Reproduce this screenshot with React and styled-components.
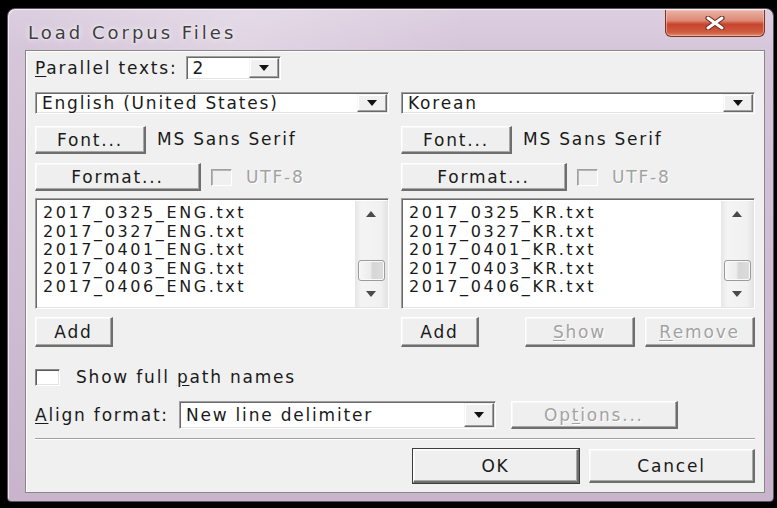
import styled, { createGlobalStyle } from "styled-components";

const FONT = `"DejaVu Sans", "Liberation Sans", sans-serif`;

const GlobalStyle = createGlobalStyle`
  html, body {
    margin: 0;
    padding: 0;
    background: #000;
  }
  body {
    font-family: ${FONT};
    overflow: hidden;
  }
`;

const Screen = styled.div`
  width: 777px;
  height: 508px;
  box-sizing: border-box;
  padding: 8px 3px 6px 7px;
  background: #000;
  display: flex;
`;

const Window = styled.div`
  flex: 1;
  display: flex;
  flex-direction: column;
  padding: 0 8px 8px 17px;
  border: 1px solid #5e5361;
  border-radius: 8px 8px 4px 4px;
  background: linear-gradient(180deg, #dccfe0 0%, #d6c6da 8%, #cdbcd2 60%, #c8b5cc 100%);
  box-shadow: inset 1px 1px 0 rgba(255, 255, 255, 0.6);
`;

const TitleBar = styled.div`
  height: 41px;
  display: flex;
  align-items: flex-start;
  justify-content: space-between;
  background: linear-gradient(90deg, rgba(255,255,255,0) 0%, rgba(255,255,255,0.25) 30%, rgba(255,255,255,0) 60%);
`;

const Title = styled.div`
  padding: 13px 0 0 3px;
  font-size: 18px;
  letter-spacing: 3px;
  color: #3d3d3d;
  text-shadow: 0 0 6px rgba(255, 255, 255, 0.95), 0 0 2px rgba(255, 255, 255, 0.9);
`;

const CloseButton = styled.div`
  width: 100px;
  height: 27px;
  margin-top: 1px;
  box-sizing: border-box;
  display: flex;
  align-items: center;
  justify-content: center;
  border: 1px solid #7a3426;
  border-top: none;
  border-radius: 0 0 6px 6px;
  background: linear-gradient(180deg, #eab3a6 0%, #dd8a77 40%, #c8452c 55%, #cf5a40 85%, #e08c70 100%);
  box-shadow: inset 0 0 0 1px rgba(255, 210, 200, 0.5);
`;

const Client = styled.div`
  flex: 1;
  display: flex;
  flex-direction: column;
  padding: 5px 9px 0 9px;
  background: #f0f0f0;
  border: 1px solid #878787;
  box-shadow: inset 1px 1px 0 #fff;
  font-size: 17px;
  letter-spacing: 1.8px;
  color: #1a1a1a;
`;

const Row = styled.div`
  display: flex;
  align-items: center;
  gap: ${(p) => p.$gap || 0}px;
  margin-top: ${(p) => p.$mt || 0}px;
  height: ${(p) => p.$h}px;
  justify-content: ${(p) => (p.$end ? "flex-end" : "flex-start")};
`;

const Label = styled.span`
  white-space: nowrap;
  color: ${(p) => (p.$disabled ? "#a2a2a2" : "#1a1a1a")};
  text-shadow: ${(p) => (p.$disabled ? "1px 1px 0 #fff" : "none")};
`;

const FontName = styled.span`
  align-self: flex-start;
  padding-top: 3px;
  white-space: nowrap;
`;

const U = styled.span`
  text-decoration: underline;
  text-underline-offset: 2px;
`;

const Combo = styled.div`
  width: ${(p) => (p.$w ? `${p.$w}px` : "auto")};
  flex: ${(p) => (p.$w ? "none" : 1)};
  height: ${(p) => p.$h}px;
  box-sizing: border-box;
  display: flex;
  align-items: stretch;
  background: #fff;
  border: 1px solid;
  border-color: #a0a0a0 #fff #fff #a0a0a0;
  box-shadow: inset 1px 1px 0 #696969, inset -1px -1px 0 #e3e3e3;
`;

const ComboText = styled.div`
  flex: 1;
  display: flex;
  align-items: center;
  padding-left: 6px;
  white-space: nowrap;
  overflow: hidden;
`;

const DropButton = styled.div`
  width: 30px;
  margin: 1px;
  box-sizing: border-box;
  display: flex;
  align-items: center;
  justify-content: center;
  background: #f0f0f0;
  border: 1px solid;
  border-color: #f5f5f5 #696969 #696969 #f5f5f5;
  box-shadow: inset -1px -1px 0 #a0a0a0, inset 1px 1px 0 #fff;
`;

const Columns = styled.div`
  display: flex;
  gap: 12px;
  margin-top: 12px;
`;

const Column = styled.div`
  flex: 1;
  display: flex;
  flex-direction: column;
`;

const Button = styled.div`
  width: ${(p) => p.$w}px;
  height: ${(p) => p.$h || 28}px;
  box-sizing: border-box;
  display: flex;
  align-items: center;
  justify-content: center;
  flex: none;
  background: #efefef;
  border: 1px solid;
  border-width: 1px 2px 2px 1px;
  border-color: #fff #6e6e6e #6e6e6e #fff;
  box-shadow: inset -1px -1px 0 #a8a8a8, inset 1px 1px 0 #f8f8f8
    ${(p) => (p.$default ? ", 0 0 0 1px #3c3c3c" : "")};
  margin-left: ${(p) => (p.$push ? "auto" : `${p.$ml || 0}px`)};
  white-space: nowrap;
  color: ${(p) => (p.$disabled ? "#a2a2a2" : "#1a1a1a")};
  text-shadow: ${(p) => (p.$disabled ? "1px 1px 0 #fff" : "none")};
`;

const CheckBox = styled.div`
  width: ${(p) => p.$w}px;
  height: 17px;
  box-sizing: border-box;
  flex: none;
  background: ${(p) => (p.$disabled ? "#f0f0f0" : "#fff")};
  border: 1px solid;
  border-color: ${(p) => (p.$disabled ? "#a0a0a0 #fff #fff #a0a0a0" : "#8a8a8a #fff #fff #8a8a8a")};
  box-shadow: ${(p) => (p.$disabled ? "inset 1px 1px 0 #b4b4b4" : "inset 1px 1px 0 #5a5a5a, inset -1px -1px 0 #e3e3e3")};
`;

const ListBox = styled.div`
  height: 111px;
  margin-top: 7px;
  box-sizing: border-box;
  display: flex;
  background: #fff;
  border: 1px solid;
  border-color: #a0a0a0 #fff #fff #a0a0a0;
  box-shadow: inset 1px 1px 0 #696969, inset -1px -1px 0 #e3e3e3;
  padding: 2px 1px 1px 2px;
`;

const Items = styled.div`
  flex: 1;
  padding: 3px 0 0 5px;
  font-size: 16px;
  letter-spacing: 2.6px;
  line-height: 18.6px;
  overflow: hidden;
`;

const Item = styled.div`
  white-space: nowrap;
`;

const ScrollBar = styled.div`
  width: 32px;
  display: flex;
  flex-direction: column;
  background: linear-gradient(90deg, #e6e6e6 0%, #f4f4f4 20%, #f1f1f1 80%, #e4e4e4 100%);
`;

const ScrollArrow = styled.div`
  height: 26px;
  display: flex;
  align-items: center;
  justify-content: center;
`;

const Track = styled.div`
  flex: 1;
  display: flex;
  flex-direction: column;
  justify-content: flex-end;
  align-items: center;
`;

const Thumb = styled.div`
  width: 27px;
  height: 21px;
  box-sizing: border-box;
  border: 1px solid #9b9b9b;
  border-radius: 3px;
  background: linear-gradient(90deg, #f6f6f6 0%, #ececec 45%, #d6d6d6 55%, #dcdcdc 100%);
  box-shadow: inset 0 0 0 1px #fafafa;
`;

const Separator = styled.div`
  margin-top: 9px;
  height: 1px;
  background: #a0a0a0;
  border-bottom: 1px solid #fff;
`;

const Arrow = ({ up, color = "#111" }) => (
  <svg width="10" height="6" viewBox="0 0 10 6">
    <polygon points={up ? "0,6 10,6 5,0" : "0,0 10,0 5,6"} fill={color} />
  </svg>
);

const CloseGlyph = () => (
  <svg width="22" height="14" viewBox="0 0 22 14">
    <path d="M4 2 L18 12 M18 2 L4 12" stroke="#6b2a1e" strokeWidth="5" strokeLinecap="round" />
    <path d="M4 2 L18 12 M18 2 L4 12" stroke="#fff" strokeWidth="3" strokeLinecap="round" />
  </svg>
);

const corpora = [
  {
    lang: "English (United States)",
    files: ["2017_0325_ENG.txt", "2017_0327_ENG.txt", "2017_0401_ENG.txt", "2017_0403_ENG.txt", "2017_0406_ENG.txt"],
    extra: false,
  },
  {
    lang: "Korean",
    files: ["2017_0325_KR.txt", "2017_0327_KR.txt", "2017_0401_KR.txt", "2017_0403_KR.txt", "2017_0406_KR.txt"],
    extra: true,
  },
];

function CorpusColumn({ corpus }) {
  return (
    <Column>
      <Combo $h={26}>
        <ComboText>{corpus.lang}</ComboText>
        <DropButton><Arrow /></DropButton>
      </Combo>
      <Row $mt={12} $h={28} $gap={11}>
        <Button $w={111}>Font...</Button>
        <FontName>MS Sans Serif</FontName>
      </Row>
      <Row $mt={9} $h={28} $gap={10}>
        <Button $w={166}>Format...</Button>
        <CheckBox $w={21} $disabled />
        <Label $disabled style={{ marginLeft: 4 }}>UTF-8</Label>
      </Row>
      <ListBox>
        <Items>
          {corpus.files.map((f) => (
            <Item key={f}>{f}</Item>
          ))}
        </Items>
        <ScrollBar>
          <ScrollArrow><Arrow up color="#4a4a4a" /></ScrollArrow>
          <Track><Thumb /></Track>
          <ScrollArrow><Arrow color="#4a4a4a" /></ScrollArrow>
        </ScrollBar>
      </ListBox>
      <Row $mt={8} $h={30} $gap={10}>
        <Button $w={78} $h={30}>Add</Button>
        {corpus.extra && (
          <>
            <Button $w={110} $h={30} $disabled $push><U>S</U>how</Button>
            <Button $w={110} $h={30} $disabled><U>R</U>emove</Button>
          </>
        )}
      </Row>
    </Column>
  );
}

export default function App() {
  return (
    <>
      <GlobalStyle />
      <Screen>
        <Window>
          <TitleBar>
            <Title>Load Corpus Files</Title>
            <CloseButton><CloseGlyph /></CloseButton>
          </TitleBar>
          <Client>
            <Row $h={24} $gap={8}>
              <Label><U>P</U>arallel texts:</Label>
              <Combo $w={95} $h={24}>
                <ComboText>2</ComboText>
                <DropButton><Arrow /></DropButton>
              </Combo>
            </Row>
            <Columns>
              {corpora.map((c) => (
                <CorpusColumn key={c.lang} corpus={c} />
              ))}
            </Columns>
            <Row $mt={21} $h={18} $gap={16}>
              <CheckBox $w={25} />
              <Label>Show full <U>p</U>ath names</Label>
            </Row>
            <Row $mt={15} $h={28} $gap={10}>
              <Label><U>A</U>lign format:</Label>
              <Combo $w={317} $h={28}>
                <ComboText>New line delimiter</ComboText>
                <DropButton><Arrow /></DropButton>
              </Combo>
              <Button $w={167} $ml={5} $disabled>Op<U>t</U>ions...</Button>
            </Row>
            <Separator />
            <Row $mt={9} $h={34} $gap={10} $end>
              <Button $w={166} $h={34} $default>OK</Button>
              <Button $w={166} $h={34}>Cancel</Button>
            </Row>
          </Client>
        </Window>
      </Screen>
    </>
  );
}
